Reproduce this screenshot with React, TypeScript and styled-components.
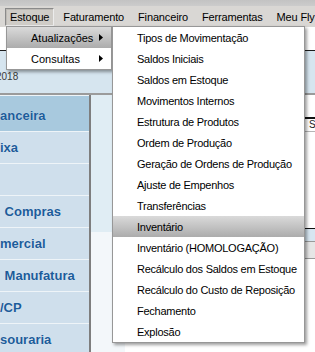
import React from "react";
import styled, { createGlobalStyle, css } from "styled-components";

const GlobalStyle = createGlobalStyle`
  html, body { margin: 0; padding: 0; background: #fff; }
  body { font-family: "Liberation Sans", Arial, sans-serif; }
  #root { width: 315px; height: 352px; overflow: hidden; }
`;

const Page = styled.div`
  position: relative;
  width: 315px;
  height: 352px;
  overflow: hidden;
  display: flex;
  flex-direction: column;
  background: #fff;
`;

const TopStrip = styled.div`
  flex: none;
  height: 6px;
  background: linear-gradient(#c3c3c3, #cccccc);
`;

const MenuBar = styled.div`
  flex: none;
  height: 21px;
  background: #d9d7d4;
  display: flex;
  align-items: center;
  padding-left: 3px;
  font-size: 11px;
  letter-spacing: -0.15px;
  color: #000;
  white-space: nowrap;
`;

const BarItem = styled.div<{ $active?: boolean }>`
  height: 18px;
  margin: 0 2px;
  padding: 0 4px;
  box-sizing: border-box;
  display: flex;
  align-items: center;
  border: 1px solid transparent;
  ${(p) =>
    p.$active &&
    css`
      background: #cfccc7;
      border-color: #8a8a8a #ececec #ececec #8a8a8a;
      box-shadow: inset 1px 1px 0 #bdbab5;
    `}
`;

const Toolbar = styled.div`
  flex: none;
  height: 23px;
  background: #fff;
`;

const DateBand = styled.div`
  flex: none;
  height: 42px;
  box-sizing: content-box;
  border-top: 1px solid #1c1c1c;
  border-bottom: 2px solid #9b9b9b;
  background: #d6e5ef;
  font-size: 10px;
  color: #3a3a3a;
  overflow: hidden;
`;

const DateText = styled.div`
  margin-top: 20px;
  margin-left: -4px;
  line-height: 12px;
`;

const Body = styled.div`
  flex: 1;
  display: flex;
  min-height: 0;
`;

const Sidebar = styled.div`
  flex: none;
  width: 89px;
  border-right: 2px solid #7e7e7e;
  background: #eef4f8;
  padding-top: 1px;
  display: flex;
  flex-direction: column;
  gap: 1px;
  overflow: hidden;
`;

const SideRow = styled.div<{ $selected?: boolean; $tall?: boolean; $indent?: number }>`
  flex: none;
  height: ${(p) => (p.$tall ? 35 : 31)}px;
  padding-top: ${(p) => (p.$tall ? 3 : 0)}px;
  box-sizing: border-box;
  display: flex;
  align-items: center;
  padding-left: ${(p) => p.$indent ?? 0}px;
  background: ${(p) => (p.$selected ? "#a8c9de" : "#cfdfec")};
  color: #1c5c9a;
  font-weight: bold;
  font-size: 13px;
  white-space: pre;
  text-shadow: 0 0 1px rgba(255, 255, 255, 0.6);
`;

const Main = styled.div`
  flex: 1;
  display: flex;
`;

const Gutter = styled.div`
  flex: none;
  width: 34px;
  background: linear-gradient(to bottom, #e0edf4 0, #e0edf4 137px, #f3f7fa 137px);
`;

const Panel = styled.div`
  flex: 1;
  background: #fff;
  padding-top: 22px;
  display: flex;
  flex-direction: column;
`;

const PanelHead = styled.div`
  height: 12px;
  border-top: 2px solid #111;
  border-bottom: 1px solid #b5b5b5;
  display: flex;
  font-size: 10px;
  line-height: 12px;
  color: #222;
  white-space: nowrap;
`;

const HeadCell = styled.div<{ $w?: number }>`
  flex: ${(p) => (p.$w ? `0 0 ${p.$w}px` : "1")};
  padding-left: 2px;
`;

const PanelSpace = styled.div<{ $h: number }>`
  height: ${(p) => p.$h}px;
`;

const PanelRow = styled.div<{ $bg: string; $h: number; $top?: string }>`
  height: ${(p) => p.$h}px;
  background: ${(p) => p.$bg};
  border-top: ${(p) => p.$top ?? "none"};
  border-bottom: 1px solid #9a9a9a;
`;

const Menu = styled.div<{ $left: number; $top: number; $width: number; $tight?: boolean }>`
  position: absolute;
  left: ${(p) => p.$left}px;
  top: ${(p) => p.$top}px;
  width: ${(p) => p.$width}px;
  box-sizing: border-box;
  background: #fff;
  border: 1px solid #979797;
  box-shadow: 2px 2px 3px rgba(0, 0, 0, 0.38);
  display: flex;
  flex-direction: column;
  font-size: 11px;
  letter-spacing: ${(p) => (p.$tight ? "-0.25px" : "0")};
  color: #141414;
  white-space: nowrap;
`;

const MenuRow = styled.div<{ $hot?: boolean }>`
  height: 21px;
  display: flex;
  align-items: center;
  justify-content: space-between;
  padding: 0 8px 0 24px;
  background: ${(p) => (p.$hot ? "linear-gradient(to bottom, #dadada, #acacac)" : "transparent")};
  color: #000;
`;

const Arrow = () => (
  <svg width="4" height="7" viewBox="0 0 4 7">
    <polygon points="0,0 4,3.5 0,7" fill="#000" />
  </svg>
);

const topItems = ["Estoque", "Faturamento", "Financeiro", "Ferramentas", "Meu Fly"];

const sideItems: { label: string; selected?: boolean; indent?: number }[] = [
  { label: "anceira", selected: true },
  { label: "ixa" },
  { label: "" },
  { label: " Compras", indent: 1 },
  { label: "mercial" },
  { label: " Manufatura", indent: 1 },
  { label: "/CP" },
  { label: "souraria" },
];

const subItems = [
  "Tipos de Movimentação",
  "Saldos Iniciais",
  "Saldos em Estoque",
  "Movimentos Internos",
  "Estrutura de Produtos",
  "Ordem de Produção",
  "Geração de Ordens de Produção",
  "Ajuste de Empenhos",
  "Transferências",
  "Inventário",
  "Inventário (HOMOLOGAÇÃO)",
  "Recálculo dos Saldos em Estoque",
  "Recálculo do Custo de Reposição",
  "Fechamento",
  "Explosão",
];

export default function App() {
  return (
    <Page>
      <GlobalStyle />
      <TopStrip />
      <MenuBar>
        {topItems.map((t, i) => (
          <BarItem key={t} $active={i === 0}>
            {t}
          </BarItem>
        ))}
      </MenuBar>
      <Toolbar />
      <DateBand>
        <DateText>2018</DateText>
      </DateBand>
      <Body>
        <Sidebar>
          {sideItems.map((s, i) => (
            <SideRow key={i} $selected={s.selected} $tall={i === 0} $indent={s.indent}>
              {s.label}
            </SideRow>
          ))}
        </Sidebar>
        <Main>
          <Gutter />
          <Panel>
            <PanelHead>
              <HeadCell $w={180} />
              <HeadCell>Saldo</HeadCell>
            </PanelHead>
            <PanelSpace $h={96} />
            <PanelRow $bg="#d7e6f1" $h={12} $top="1px solid #111" />
            <PanelRow $bg="#e6e6e6" $h={16} />
          </Panel>
        </Main>
      </Body>

      <Menu $left={6} $top={26} $width={106}>
        <MenuRow $hot>
          <span>Atualizações</span>
          <Arrow />
        </MenuRow>
        <MenuRow>
          <span>Consultas</span>
          <Arrow />
        </MenuRow>
      </Menu>

      <Menu $left={112} $top={26} $width={193} $tight>
        {subItems.map((t, i) => (
          <MenuRow key={i} $hot={i === 9}>
            <span>{t}</span>
          </MenuRow>
        ))}
      </Menu>
    </Page>
  );
}
